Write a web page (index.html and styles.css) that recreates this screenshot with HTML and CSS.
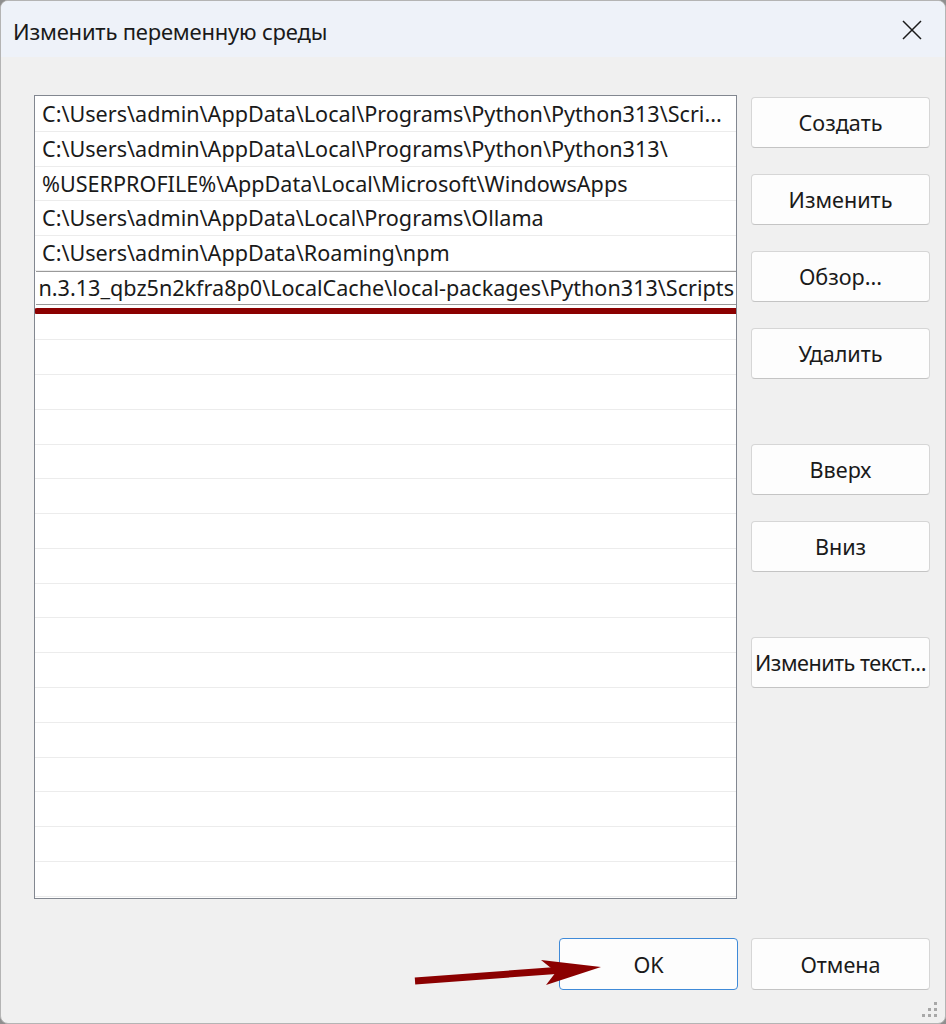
FILE: index.html
```html
<!DOCTYPE html>
<html lang="ru">
<head>
	<meta charset="UTF-8">
	<title>Изменить переменную среды</title>
	<link rel="stylesheet" href="styles.css">
</head>
<body>
	<div class="window">
		<div class="title-bar">
			<span class="title">Изменить переменную среды</span>
			<svg class="close" width="20" height="20" viewBox="0 0 20 20">
				<path d="M1 1 L19 19 M19 1 L1 19" stroke="#1a1a1a" stroke-width="1.5" fill="none"/>
			</svg>
		</div>

		<div class="content">
			<div class="list">
				<div class="row">C:\Users\admin\AppData\Local\Programs\Python\Python313\Scri...</div>
				<div class="row">C:\Users\admin\AppData\Local\Programs\Python\Python313\</div>
				<div class="row">%USERPROFILE%\AppData\Local\Microsoft\WindowsApps</div>
				<div class="row">C:\Users\admin\AppData\Local\Programs\Ollama</div>
				<div class="row">C:\Users\admin\AppData\Roaming\npm</div>
				<div class="row editing">
					<div class="edit-box"><span>n.3.13_qbz5n2kfra8p0\LocalCache\local-packages\Python313\Scripts</span></div>
				</div>
				<div class="row"></div>
				<div class="row"></div>
				<div class="row"></div>
				<div class="row"></div>
				<div class="row"></div>
				<div class="row"></div>
				<div class="row"></div>
				<div class="row"></div>
				<div class="row"></div>
				<div class="row"></div>
				<div class="row"></div>
				<div class="row"></div>
				<div class="row"></div>
				<div class="row"></div>
				<div class="row"></div>
				<div class="row"></div>
				<div class="row"></div>
				<div class="underline"></div>
			</div>

			<div class="side">
				<button class="button">Создать</button>
				<button class="button">Изменить</button>
				<button class="button">Обзор...</button>
				<button class="button">Удалить</button>
				<button class="button group">Вверх</button>
				<button class="button">Вниз</button>
				<button class="button group narrow-text">Изменить текст...</button>
			</div>
		</div>

		<div class="footer">
			<button class="button default">OK</button>
			<button class="button">Отмена</button>
		</div>

		<svg class="arrow" width="200" height="34" viewBox="0 0 200 34">
			<path d="M2 26 L150 15" stroke="#8b0000" stroke-width="7" stroke-linecap="butt" fill="none"/>
			<path d="M128 5 L188 12 L133 30 L143 17 Z" fill="#8b0000"/>
		</svg>

		<svg class="grip" width="16" height="16" viewBox="0 0 16 16">
			<g fill="#a8a8a8">
				<rect x="12" y="1" width="3" height="3"/>
				<rect x="6" y="7" width="3" height="3"/>
				<rect x="12" y="7" width="3" height="3"/>
				<rect x="0" y="13" width="3" height="3"/>
				<rect x="6" y="13" width="3" height="3"/>
				<rect x="12" y="13" width="3" height="3"/>
			</g>
		</svg>
	</div>
</body>
</html>
```

FILE: styles.css
```css
body {
	margin: 0;
	padding: 0;
	background: #8f8f8f;
	font-family: "Noto Sans", "Open Sans", sans-serif;
	color: #1a1a1a;
}

.window {
	position: relative;
	width: 944px;
	height: 1022px;
	border: 1px solid #b4b4b4;
	border-radius: 8px;
	background: #f0f0f0;
	overflow: hidden;
	display: flex;
	flex-direction: column;
}

.title-bar {
	height: 56px;
	background: #eef2f9;
	display: flex;
	align-items: center;
	justify-content: space-between;
	padding: 0 23px 0 12px;
	flex-shrink: 0;
}

.title {
	font-size: 22px;
	letter-spacing: -0.2px;
	margin-top: 3px;
}

.close {
	margin-top: 1px;
}

.content {
	display: flex;
	gap: 14px;
	padding: 38px 0 0 33px;
}

.list {
	position: relative;
	width: 701px;
	height: 801px;
	border: 1px solid #828790;
	background: #fff;
	padding-top: 1px;
	overflow: hidden;
	box-sizing: content-box;
}

.row {
	height: 33.78px;
	border-bottom: 1px solid #ececec;
	padding-left: 7px;
	font-size: 21.6px;
	line-height: 33px;
	white-space: nowrap;
	overflow: hidden;
}

.row.editing {
	padding-left: 1px;
	border-bottom: none;
	height: 34.78px;
}

.edit-box {
	height: 32px;
	border-top: 1px solid #9a9a9a;
	border-bottom: 1px solid #9a9a9a;
	display: flex;
	justify-content: flex-end;
	overflow: hidden;
	line-height: 31px;
	padding-right: 2px;
}

.underline {
	position: absolute;
	left: -1px;
	top: 212px;
	width: 704px;
	height: 6px;
	border-radius: 3px;
	background: #8b0000;
}

.side {
	display: flex;
	flex-direction: column;
	padding-top: 2px;
}

.button {
	width: 179px;
	height: 51px;
	background: #fdfdfd;
	border: 1px solid #d6d6d6;
	border-bottom-color: #c4c4c4;
	border-radius: 4px;
	font-family: "Noto Sans", "Open Sans", sans-serif;
	font-size: 21.6px;
	color: #1a1a1a;
	padding: 0;
	margin-bottom: 26px;
	cursor: pointer;
}

.side .group {
	margin-top: 39px;
}

.narrow-text {
	letter-spacing: -0.5px;
	white-space: nowrap;
}

.footer {
	display: flex;
	justify-content: flex-end;
	gap: 13px;
	padding: 39px 15px 0 0;
}

.footer .button {
	margin: 0;
	height: 52px;
}

.button.default {
	border: 1px solid #3f8ad8;
}

.arrow {
	position: absolute;
	left: 412px;
	top: 954px;
}

.grip {
	position: absolute;
	right: 7px;
	bottom: 6px;
}
```
